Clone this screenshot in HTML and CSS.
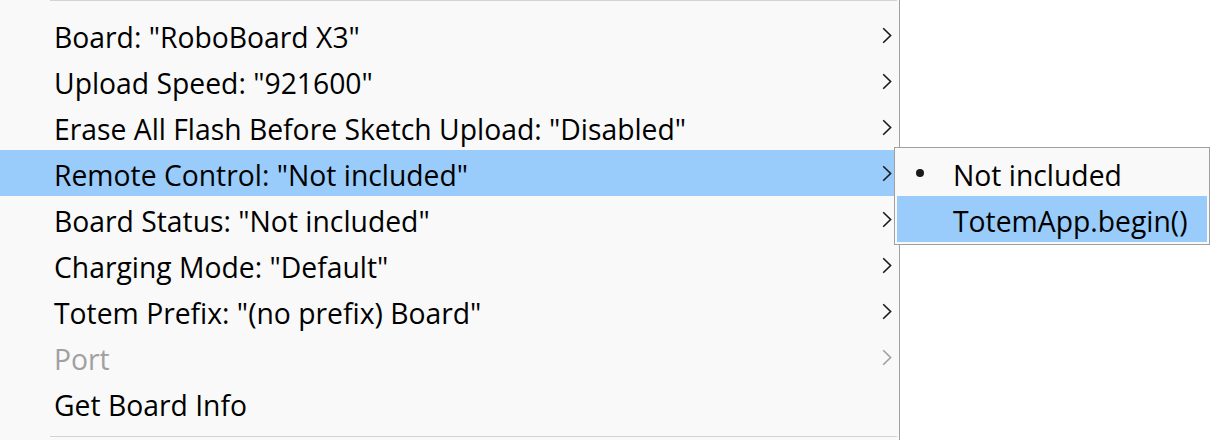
FILE: index.html
```html
<!DOCTYPE html>
<html>
<head>
<meta charset="utf-8">
<link rel="stylesheet" href="styles.css">
</head>
<body>
<div class="screen">
  <div class="menu">
    <div class="sep sep-top"></div>
    <ul class="items">
      <li class="item"><span class="label">Board: "RoboBoard X3"</span><span class="chev"><svg width="10" height="17" viewBox="0 0 10 17"><path d="M1.2 1.2 L8.6 8.5 L1.2 15.8" fill="none" stroke="currentColor" stroke-width="1.6"/></svg></span></li>
      <li class="item"><span class="label">Upload Speed: "921600"</span><span class="chev"><svg width="10" height="17" viewBox="0 0 10 17"><path d="M1.2 1.2 L8.6 8.5 L1.2 15.8" fill="none" stroke="currentColor" stroke-width="1.6"/></svg></span></li>
      <li class="item"><span class="label">Erase All Flash Before Sketch Upload: "Disabled"</span><span class="chev"><svg width="10" height="17" viewBox="0 0 10 17"><path d="M1.2 1.2 L8.6 8.5 L1.2 15.8" fill="none" stroke="currentColor" stroke-width="1.6"/></svg></span></li>
      <li class="item active"><span class="label">Remote Control: "Not included"</span><span class="chev"><svg width="10" height="17" viewBox="0 0 10 17"><path d="M1.2 1.2 L8.6 8.5 L1.2 15.8" fill="none" stroke="currentColor" stroke-width="1.6"/></svg></span></li>
      <li class="item"><span class="label">Board Status: "Not included"</span><span class="chev"><svg width="10" height="17" viewBox="0 0 10 17"><path d="M1.2 1.2 L8.6 8.5 L1.2 15.8" fill="none" stroke="currentColor" stroke-width="1.6"/></svg></span></li>
      <li class="item"><span class="label">Charging Mode: "Default"</span><span class="chev"><svg width="10" height="17" viewBox="0 0 10 17"><path d="M1.2 1.2 L8.6 8.5 L1.2 15.8" fill="none" stroke="currentColor" stroke-width="1.6"/></svg></span></li>
      <li class="item"><span class="label">Totem Prefix: "(no prefix) Board"</span><span class="chev"><svg width="10" height="17" viewBox="0 0 10 17"><path d="M1.2 1.2 L8.6 8.5 L1.2 15.8" fill="none" stroke="currentColor" stroke-width="1.6"/></svg></span></li>
      <li class="item disabled"><span class="label">Port</span><span class="chev"><svg width="10" height="17" viewBox="0 0 10 17"><path d="M1.2 1.2 L8.6 8.5 L1.2 15.8" fill="none" stroke="currentColor" stroke-width="1.6"/></svg></span></li>
      <li class="item"><span class="label">Get Board Info</span></li>
    </ul>
    <div class="sep sep-bottom"></div>
  </div>
  <div class="submenu">
    <div class="sub-item"><span class="bullet"></span><span class="sub-label">Not included</span></div>
    <div class="sub-item active"><span class="bullet-space"></span><span class="sub-label">TotemApp.begin()</span></div>
  </div>
</div>
</body>
</html>
```
FILE: styles.css
```css
html, body {
  margin: 0;
  padding: 0;
  background: #ffffff;
}
.screen {
  position: relative;
  width: 1230px;
  height: 440px;
  display: flex;
  font-family: "Open Sans", "Noto Sans", sans-serif;
  font-size: 28.3px;
  color: #000;
  overflow: hidden;
}
.menu {
  width: 900px;
  height: 440px;
  background: #f9f9f9;
  border-right: 1px solid #a0a0a0;
  box-sizing: border-box;
  display: flex;
  flex-direction: column;
}
.sep {
  height: 1px;
  background: #d3d3d3;
  margin-left: 50px;
  margin-right: 2px;
}
.items {
  list-style: none;
  margin: 11px 0 0 0;
  padding: 0;
}
.item {
  height: 46px;
  display: flex;
  align-items: center;
  padding-left: 54px;
  padding-right: 7px;
}
.item .label {
  flex: 1;
  white-space: nowrap;
  line-height: 46px;
  padding-top: 3px;
}
.item .chev {
  display: flex;
  width: 10px;
  height: 17px;
  color: #1a1a1a;
}
.item.active {
  background: #99ccfa;
}
.item.disabled {
  color: #a0a0a0;
}
.item.disabled .chev {
  color: #a0a0a0;
}
.sep-bottom {
  margin-top: 10px;
}
.submenu {
  position: absolute;
  left: 894px;
  top: 147px;
  width: 316px;
  height: 98px;
  box-sizing: border-box;
  border: 1px solid #a0a0a0;
  background: #f9f9f9;
  padding: 2px;
}
.sub-item {
  height: 46px;
  display: flex;
  align-items: center;
  white-space: nowrap;
}
.sub-item.active {
  background: #99ccfa;
}
.bullet {
  width: 8px;
  height: 8px;
  border-radius: 50%;
  background: #1a1a1a;
  margin-left: 19px;
  margin-right: 29px;
}
.bullet-space {
  width: 56px;
}
.sub-label {
  line-height: 46px;
  padding-top: 3px;
}
```
